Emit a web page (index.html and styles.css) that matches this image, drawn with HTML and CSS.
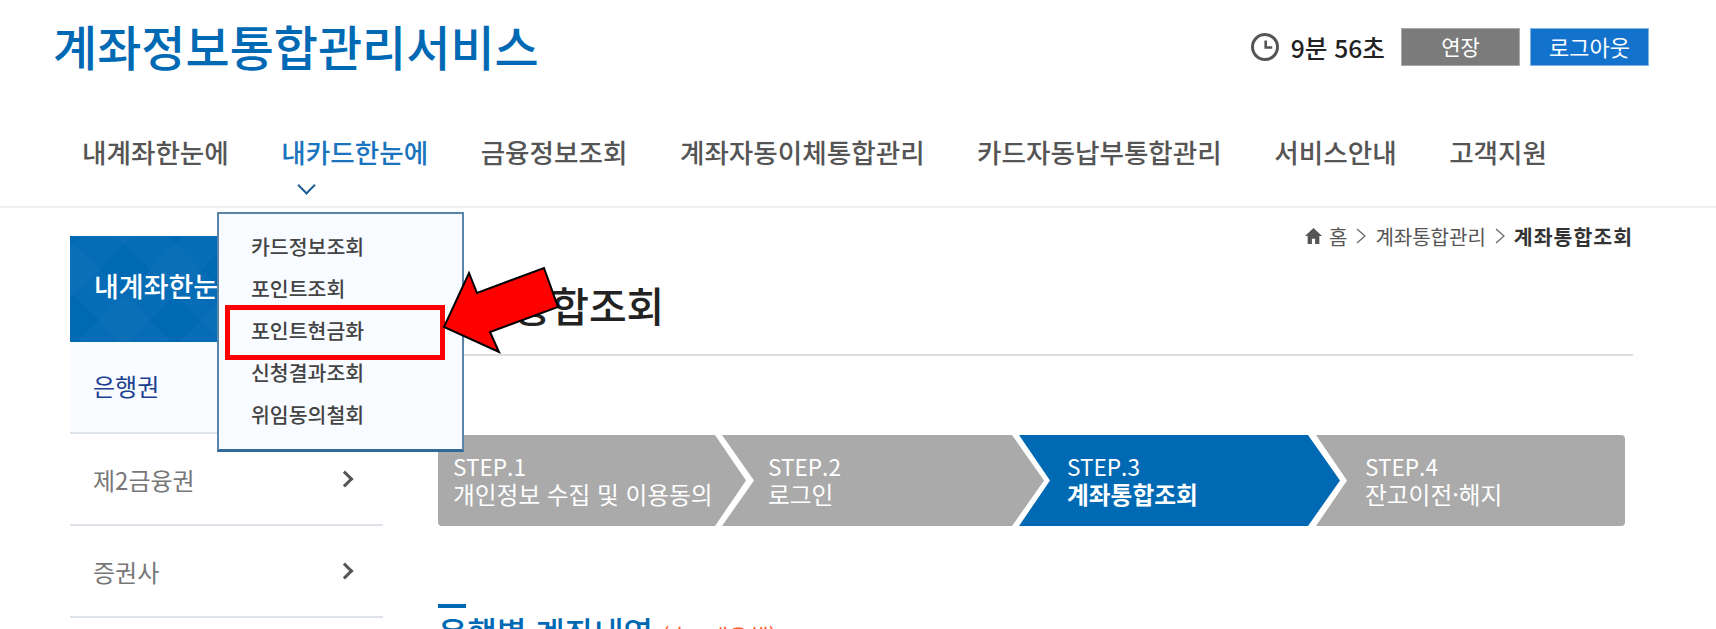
FILE: index.html
```html
<!DOCTYPE html>
<html lang="ko">
<head>
    <meta charset="UTF-8">
    <meta name="viewport" content="width=device-width, initial-scale=1.0">
    <title>계좌정보통합관리서비스</title>
    <link rel="stylesheet" href="styles.css">
</head>
<body>
    <div class="top">
        <div class="logo">계좌정보통합관리서비스</div>
        <div class="session">
            <svg class="clock" width="28" height="28" viewBox="0 0 28 28">
                <circle cx="14" cy="14" r="12.5" fill="none" stroke="#555" stroke-width="3"/>
                <path d="M14.7 7.5v7h6.5" fill="none" stroke="#555" stroke-width="2.6"/>
            </svg>
            <span class="time">9분 56초</span>
            <span class="btn btnGray">연장</span>
            <span class="btn btnBlue">로그아웃</span>
        </div>
    </div>
    <div class="nav">
        <a>내계좌한눈에</a>
        <a class="on">내카드한눈에</a>
        <a>금융정보조회</a>
        <a>계좌자동이체통합관리</a>
        <a>카드자동납부통합관리</a>
        <a>서비스안내</a>
        <a>고객지원</a>
    </div>
    <div class="main">
        <div class="side">
            <div class="sideTit">내계좌한눈에</div>
            <div class="sideRow cur">은행권</div>
            <div class="sideRow">제2금융권<i class="arr"></i></div>
            <div class="sideRow">증권사<i class="arr"></i></div>
        </div>
        <div class="content">
            <div class="path">
                <svg class="home" width="17" height="16" viewBox="0 0 16 15"><path d="M8 0L0 7.5h2.5V15h4v-5h3v5h4V7.5H16z" fill="#555"/></svg>
                <span>홈</span>
                <svg width="10" height="16" viewBox="0 0 10 16"><path d="M1 1l8 7-8 7" fill="none" stroke="#666" stroke-width="1.2"/></svg>
                <span>계좌통합관리</span>
                <svg width="10" height="16" viewBox="0 0 10 16"><path d="M1 1l8 7-8 7" fill="none" stroke="#666" stroke-width="1.2"/></svg>
                <b>계좌통합조회</b>
            </div>
            <h1>계좌통합조회</h1>
            <ul class="steps">
                <li class="step s1"><span class="txt"><span class="no">STEP.1</span><br>개인정보 수집 및 이용동의</span></li>
                <li class="step s2"><span class="txt"><span class="no">STEP.2</span><br>로그인</span></li>
                <li class="step s3"><span class="txt"><span class="no">STEP.3</span><br><b>계좌통합조회</b></span></li>
                <li class="step s4"><span class="txt"><span class="no">STEP.4</span><br>잔고이전·해지</span></li>
            </ul>
            <h2>은행별 계좌내역 <small>(총 0개은행)</small></h2>
        </div>
    </div>

    <!-- 드롭다운 메뉴 + 강조 표시 -->
    <ul class="drop">
        <li>카드정보조회</li>
        <li>포인트조회</li>
        <li>포인트현금화</li>
        <li>신청결과조회</li>
        <li>위임동의철회</li>
    </ul>
    <div class="redBox"></div>
    <svg class="redArrow" width="124" height="92" viewBox="0 0 124 92">
        <path d="M4 62L29 8L37 28L104 3L118 42L50 67L59 87Z" fill="#f00" stroke="#000" stroke-width="2"/>
    </svg>
</body>
</html>
```

FILE: styles.css
```css
*{
    padding: 0;
    margin: 0;
    list-style: none;
    box-sizing: border-box;
}
body{
    width: 1716px;
    height: 629px;
    overflow: hidden;
    background: #fff;
    font-family: "Noto Sans CJK KR", "Liberation Sans", sans-serif;
    color: #333;
}
.top{
    display: flex;
    justify-content: space-between;
    height: 105px;
    padding: 14px 67px 0 53px;
}
.logo{
    font-size: 48px;
    font-weight: 500;
    line-height: 62px;
    color: #0069b4;
}
.session{
    display: flex;
    align-items: center;
    height: 38px;
    margin-top: 14px;
}
.clock{
    margin-right: 12px;
}
.time{
    margin-right: 16px;
    color: #222;
    font-size: 24.6px;
    font-weight: 500;
}
.btn{
    width: 119px;
    height: 38px;
    border: 1px solid #aaa;
    font-size: 21px;
    line-height: 34px;
    text-align: center;
    color: #fff;
}
.btnGray{
    background: #7b7b7b;
}
.btnBlue{
    margin-left: 10px;
    background: #1272cc;
    border-color: #7fb4e4;
    font-size: 22px;
}
.nav{
    display: flex;
    gap: 52.5px;
    height: 103px;
    padding: 26px 0 0 82px;
    border-bottom: 2px solid #eee;
    font-size: 26.6px;
    font-weight: 500;
    line-height: 42px;
    color: #555;
}
.nav .on{
    position: relative;
    color: #1a74bd;
}
.nav .on:after{
    content: "";
    position: absolute;
    left: 19px;
    top: 48px;
    width: 11px;
    height: 11px;
    border-right: 2px solid #1f5d95;
    border-bottom: 2px solid #1f5d95;
    transform: rotate(45deg);
}
.main{
    display: flex;
    padding: 0 83px 0 70px;
}
.side{
    width: 313px;
    margin-top: 28px;
}
.sideTit{
    height: 106px;
    padding-left: 24px;
    background-color: #0069b4;
    background-image: repeating-linear-gradient(45deg, transparent 0 36px, rgba(255,255,255,0.025) 36px 72px), repeating-linear-gradient(-45deg, transparent 0 36px, rgba(255,255,255,0.025) 36px 72px);
    font-size: 27px;
    font-weight: 500;
    line-height: 100px;
    color: #fff;
}
.sideRow{
    display: flex;
    justify-content: space-between;
    align-items: center;
    height: 92px;
    padding: 0 32px 0 23px;
    border-bottom: 2px solid #dde3e8;
    font-size: 24px;
    color: #777;
}
.cur{
    padding-bottom: 3px;
    background: #f8fbff;
    color: #1c3f8f;
}
.arr{
    width: 12px;
    height: 12px;
    border-top: 3px solid #555;
    border-right: 3px solid #555;
    transform: rotate(45deg);
}
.content{
    flex: 1;
    margin-left: 55px;
}
.path{
    display: flex;
    justify-content: flex-end;
    align-items: center;
    gap: 9px;
    height: 24px;
    margin-top: 16px;
    padding-right: 1px;
    font-size: 20px;
    color: #555;
}
.path b{
    margin-right: -1px;
    font-size: 20.5px;
    letter-spacing: 1px;
    color: #333;
}
.home{
    margin-right: -2px;
}
h1{
    height: 108px;
    padding-top: 27px;
    border-bottom: 2px solid #ddd;
    font-size: 41px;
    font-weight: 500;
    line-height: 58px;
    color: #222;
}
.steps{
    display: flex;
    width: 1187px;
    margin-top: 79px;
}
.step{
    height: 91px;
    padding: 18px 0 0 15px;
    font-size: 23.7px;
    line-height: 27.5px;
    white-space: nowrap;
    color: #fff;
    background: #aaa;
}
.txt{
    display: inline-block;
}
.no{
    font-size: 22.6px;
}
.step b{
    font-weight: 700;
}
.s1{
    width: 308px;
    border-radius: 4px 0 0 4px;
    clip-path: polygon(0 0, 277px 0, 308px 50%, 277px 100%, 0 100%);
}
.s2{
    width: 322px;
    margin-left: -24px;
    padding-left: 46px;
    clip-path: polygon(0 0, 290px 0, 322px 50%, 290px 100%, 0 100%, 32px 50%);
}
.s3{
    width: 321px;
    margin-left: -25px;
    padding-left: 48px;
    background: #0069b4;
    clip-path: polygon(0 0, 289px 0, 321px 50%, 289px 100%, 0 100%, 31px 50%);
}
.s4{
    flex: 1;
    margin-left: -24px;
    padding-left: 49px;
    border-radius: 0 4px 4px 0;
    clip-path: polygon(0 0, 100% 0, 100% 100%, 0 100%, 31px 50%);
}
h2{
    position: relative;
    margin-top: 84px;
    font-size: 32px;
    font-weight: 500;
    line-height: 42px;
    color: #0069b4;
}
h2:before{
    content: "";
    position: absolute;
    left: 0;
    top: -6px;
    width: 28px;
    height: 4px;
    background: #0069b4;
}
h2 small{
    font-size: 22px;
    font-weight: 400;
    color: #ff5a1e;
}
.drop{
    position: absolute;
    left: 217px;
    top: 212px;
    width: 247px;
    height: 240px;
    padding-top: 11px;
    background: #f8fbff;
    border: 2px solid #5a84a8;
    border-bottom-width: 3px;
    border-bottom-color: #2f6a99;
    font-size: 20.5px;
    font-weight: 500;
    color: #444;
}
.drop li{
    height: 42px;
    padding-left: 32px;
    line-height: 42px;
}
.redBox{
    position: absolute;
    left: 225px;
    top: 305px;
    width: 220px;
    height: 55px;
    border: 5px solid #f00;
}
.redArrow{
    position: absolute;
    left: 440px;
    top: 265px;
}
```
